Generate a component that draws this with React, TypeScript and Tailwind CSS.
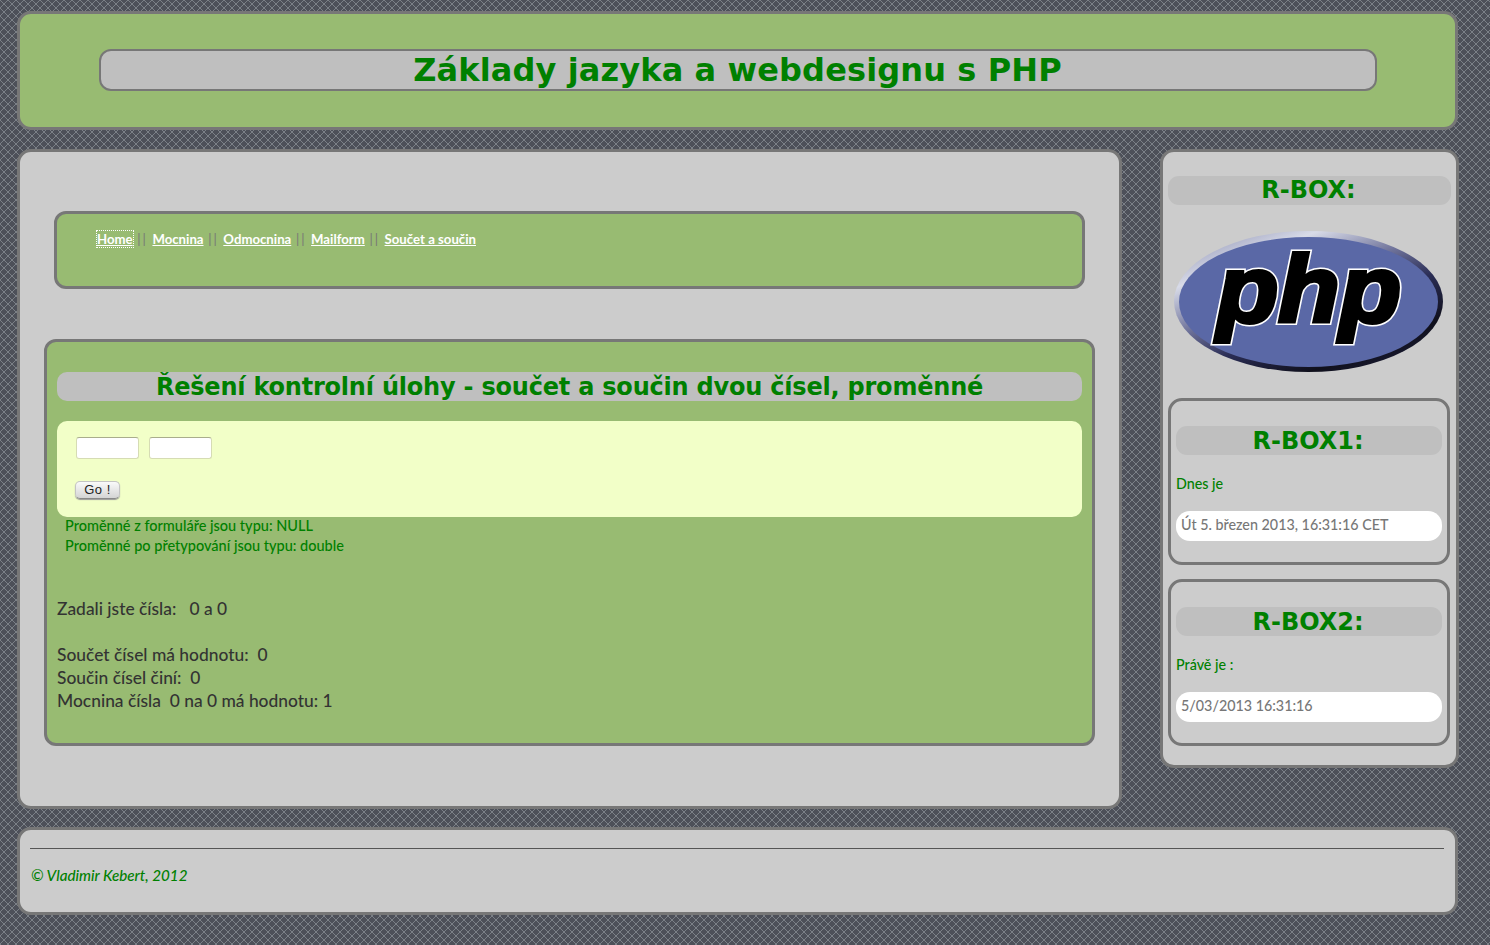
const links = ["Home", "Mocnina", "Odmocnina", "Mailform", "Součet a součin"];

function PhpLogo() {
  return (
    <svg width="269" height="141" viewBox="0 0 269 141" className="block">
      <defs>
        <linearGradient id="rim" x1="0.12" y1="0" x2="0.88" y2="1">
          <stop offset="0" stop-color="#8f93b4" />
          <stop offset="0.2" stop-color="#d8dbe8" />
          <stop offset="0.42" stop-color="#6d7199" />
          <stop offset="0.6" stop-color="#2a2d55" />
          <stop offset="0.82" stop-color="#10101c" />
          <stop offset="1" stop-color="#1c1e3c" />
        </linearGradient>
      </defs>
      <ellipse cx="134.5" cy="70.5" rx="134.5" ry="70.5" fill="url(#rim)" />
      <ellipse cx="134.5" cy="71" rx="129.5" ry="65" fill="#5a68a6" />
      <g fontFamily="'Liberation Sans', sans-serif" fontWeight="700" fontStyle="italic" fontSize="94" textAnchor="middle">
        <text x="135" y="91" textLength="184" lengthAdjust="spacingAndGlyphs" stroke="#fff" strokeWidth="7" strokeLinejoin="miter" fill="#fff">
          php
        </text>
        <text x="135" y="91" textLength="184" lengthAdjust="spacingAndGlyphs" stroke="#000" strokeWidth="4" strokeLinejoin="miter" fill="#000">
          php
        </text>
      </g>
    </svg>
  );
}

function SideBox({ title, label, value }: { title: string; label: string; value: string }) {
  return (
    <div className="h-[167px] w-[282px] rounded-[14px] border-[3px] border-[#777] px-[5px] pt-[25px]">
      <h3 className="h-[29px] rounded-[11px] bg-[#bfbfbf] pr-[2px] text-center font-['DejaVu_Sans'] text-[24px] leading-[31px] font-bold text-[#008000]">
        {title}
      </h3>
      <p className="mt-[19px] text-[14.3px] leading-[20px] font-medium text-[#008000]">{label}</p>
      <div className="mt-[17px] h-[30px] rounded-[14px] bg-white pl-[5px] text-[14.3px] leading-[28px] font-medium text-[#777]">
        {value}
      </div>
    </div>
  );
}

export default function App() {
  return (
    <div className="h-[945px] overflow-hidden bg-[#4d5059] bg-[linear-gradient(45deg,transparent_44%,#7b8087_44%,#7b8087_56%,transparent_56%),linear-gradient(-45deg,transparent_44%,#7b8087_44%,#7b8087_56%,transparent_56%)] bg-[length:8px_8px] pt-[11px] pl-[17px] font-['Lato',sans-serif]">
      <header className="flex h-[119px] w-[1441px] items-center justify-center rounded-[14px] border-[3px] border-[#777] bg-[#98bb72]">
        <div className="-mt-[2px] h-[42px] w-[1278px] rounded-[12px] border-2 border-[#777] bg-[#bfbfbf] text-center">
          <h1 className="font-['DejaVu_Sans'] text-[32px] leading-[38px] font-bold tracking-[0.12px] text-[#008000]">
            Základy jazyka a webdesignu s PHP
          </h1>
        </div>
      </header>

      <div className="mt-[19px] flex w-[1442px] items-start justify-between">
        <main className="h-[660px] w-[1105px] rounded-[14px] border-[3px] border-[#777] bg-[#ccc] pt-[59px] pl-[24px]">
          <nav className="ml-[10px] h-[78px] w-[1031px] rounded-[12px] border-[3px] border-[#777] bg-[#98bb72] pt-[15px] pl-[40px] text-[13.2px] leading-[20px] font-bold text-[#777]">
            {links.map((link, i) => (
              <span key={link}>
                {i > 0 && <span className="mx-[4.6px] font-normal tracking-[2px]">||</span>}
                <a href="#" className={i === 0 ? "text-white underline outline-1 outline-dotted outline-white" : "text-white underline"}>
                  {link}
                </a>
              </span>
            ))}
          </nav>

          <section className="mt-[50px] h-[407px] w-[1051px] rounded-[12px] border-[3px] border-[#777] bg-[#98bb72] px-[10px] pt-[30px]">
            <h2 className="h-[29px] rounded-[10px] bg-[#bfbfbf] text-center font-['DejaVu_Sans'] text-[24px] leading-[30px] font-bold tracking-[-0.21px] text-[#008000]">
              Řešení kontrolní úlohy - součet a součin dvou čísel, proměnné
            </h2>
            <form className="mt-[20px] h-[96px] rounded-[10px] bg-[#f2ffc8] pt-[16px] pl-[18px]">
              <div className="flex gap-[10px] pl-px">
                <input className="h-[22px] w-[63px] rounded-[3px] border border-[#d6dcb4] border-t-[#a9ad8c] bg-white" />
                <input className="h-[22px] w-[63px] rounded-[3px] border border-[#d6dcb4] border-t-[#a9ad8c] bg-white" />
              </div>
              <button
                type="button"
                className="mt-[22px] block h-[18px] w-[45px] rounded-[5px] border border-[#c4c4c4] border-b-[#888] bg-gradient-to-b from-[#fafafa] to-[#d4d4d4] font-['Liberation_Sans'] text-[13px] leading-[16px] tracking-[0.5px] text-[#222] shadow-[0_1px_1px_#999]"
              >
                Go !
              </button>
            </form>
            <div className="-mt-px pl-[8px] text-[14.5px] leading-[20px] font-medium text-[#008000]">
              <p>Proměnné z formuláře jsou typu: NULL</p>
              <p>Proměnné po přetypování jsou typu: double</p>
            </div>
            <div className="mt-[41px] text-[17.4px] leading-[23px] font-medium text-[#333]">
              <p className="whitespace-pre">Zadali jste čísla:   0 a 0</p>
              <p className="mt-[23px] whitespace-pre">Součet čísel má hodnotu:  0</p>
              <p className="whitespace-pre">Součin čísel činí:  0</p>
              <p className="whitespace-pre">Mocnina čísla  0 na 0 má hodnotu: 1</p>
            </div>
          </section>
        </main>

        <aside className="h-[619px] w-[299px] rounded-[14px] border-[3px] border-[#777] bg-[#ccc] px-[5px] pt-[24px]">
          <h3 className="h-[29px] w-[283px] rounded-[11px] bg-[#bfbfbf] pr-[2px] text-center font-['DejaVu_Sans'] text-[24px] leading-[28px] font-bold text-[#008000]">
            R-BOX:
          </h3>
          <div className="mt-[26px] ml-[6px]">
            <PhpLogo />
          </div>
          <div className="mt-[26px] flex flex-col gap-[14px]">
            <SideBox title="R-BOX1:" label="Dnes je" value="Út 5. březen 2013, 16:31:16 CET" />
            <SideBox title="R-BOX2:" label="Právě je :" value="5/03/2013 16:31:16" />
          </div>
        </aside>
      </div>

      <footer className="mt-[18px] h-[88px] w-[1441px] rounded-[14px] border-[3px] border-[#777] bg-[#ccc] pt-[18px] pr-[11px] pl-[10px]">
        <hr className="border-t border-[#555]" />
        <p className="mt-[16px] pl-px text-[15.2px] leading-[20px] font-medium text-[#008000] italic">© Vladimir Kebert, 2012</p>
      </footer>
    </div>
  );
}
